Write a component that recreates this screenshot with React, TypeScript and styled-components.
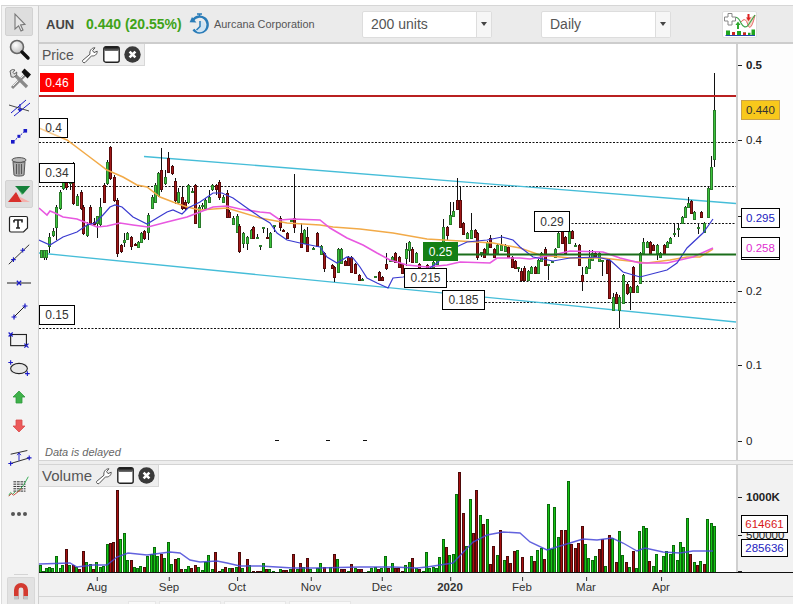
import * as React from 'react';
import styled, { createGlobalStyle } from 'styled-components';

const PLOT_LEFT = 39;
const PRICE_TOP = 44;
const PRICE_BOTTOM = 460;
const VOLUME_TOP = 465;
const VOLUME_BOTTOM = 572;

const GlobalStyle = createGlobalStyle`
  html, body {
    margin: 0;
    padding: 0;
    background: #fff;
    overflow: hidden;
  }
  body {
    font-family: "Liberation Sans", Arial, sans-serif;
  }
`;

const Page = styled.div`
  width: 793px;
  height: 604px;
  padding: 5px 0 0 1px;
  box-sizing: border-box;
  display: flex;
  overflow: hidden;
`;

const Sidebar = styled.div`
  width: 38px;
  flex: none;
  box-sizing: border-box;
  background: #f3f3f3;
  border-left: 1px solid #dcdcdc;
  border-right: 1px solid #cfcfcf;
  border-top: 1px solid #d6d6d6;
  display: flex;
  flex-direction: column;
  align-items: center;
  padding-top: 1px;
`;

const Tool = styled.div<{ $h?: number; $active?: boolean }>`
  width: 28px;
  height: ${p => p.$h ?? 29}px;
  flex: none;
  margin-right: 3px;
  box-sizing: border-box;
  display: flex;
  align-items: center;
  justify-content: center;
  background: ${p => (p.$active ? '#dedede' : 'transparent')};
  border: 1px solid ${p => (p.$active ? '#d2d2d2' : 'transparent')};
  border-radius: 2px;
`;

const MagnetSlot = styled.div`
  margin-top: auto;
  width: 28px;
  height: 27px;
  margin-left: 1px;
  position: relative;
  box-sizing: border-box;
  border-top: 1px solid #d8d8d8;
  border-left: 1px solid #d8d8d8;
  border-right: 1px solid #d8d8d8;
  background: #e2e2e2;
  border-radius: 2px 2px 0 0;
  display: flex;
  align-items: center;
  justify-content: center;

  &::before {
    content: '';
    position: absolute;
    left: 6px;
    right: 6px;
    top: -4px;
    height: 1px;
    background: #d4d4d4;
  }
`;

const Main = styled.div`
  flex: 1;
  min-width: 0;
  display: flex;
  flex-direction: column;
`;

const TopBar = styled.div`
  height: 39px;
  flex: none;
  box-sizing: border-box;
  background: #ebebeb;
  border-top: 1px solid #d6d6d6;
  border-bottom: 2px solid #cdcdcd;
  display: flex;
  align-items: center;
  padding-left: 7px;
`;

const Symbol = styled.span`
  font-size: 13px;
  font-weight: bold;
  color: #444;
  width: 40px;
`;

const Change = styled.span`
  font-size: 14px;
  font-weight: bold;
  color: #3fa318;
  width: 103px;
  white-space: nowrap;
`;

const CompanyName = styled.span`
  font-size: 10.9px;
  color: #555;
  width: 148px;
  margin-left: 4px;
  white-space: nowrap;
`;

const Select = styled.div`
  width: 130px;
  height: 27px;
  box-sizing: border-box;
  background: #fff;
  border: 1px solid #ddd;
  border-radius: 2px;
  display: flex;
  align-items: center;
  font-size: 14px;
  color: #555;
  padding-left: 8px;
  margin-right: 49px;
`;

const SelectText = styled.span`
  flex: 1;
`;

const SelectArrow = styled.span`
  width: 15px;
  height: 100%;
  box-sizing: border-box;
  border-left: 1px solid #ddd;
  background: #f6f6f6;
  display: flex;
  align-items: center;
  justify-content: center;

  &::after {
    content: '';
    border-left: 3.5px solid transparent;
    border-right: 3.5px solid transparent;
    border-top: 4px solid #444;
  }
`;

const IndicatorButton = styled.div`
  width: 35px;
  height: 27px;
  margin-left: 2px;
  box-sizing: border-box;
  background: #fff;
  border: 1px solid #ddd;
  border-radius: 2px;
  display: flex;
  align-items: center;
  justify-content: center;
`;

const PaneRow = styled.div<{ $h: number }>`
  height: ${p => p.$h}px;
  flex: none;
  display: flex;
`;

const Plot = styled.div`
  width: 697px;
  flex: none;
  position: relative;
  background: #fff;
  overflow: hidden;
`;

const ChartSvg = styled.svg`
  display: block;
  width: 100%;
  height: 100%;
`;

const Axis = styled.div<{ $bg: string }>`
  flex: 1;
  position: relative;
  background: ${p => p.$bg};
  border-left: 2px solid #d0d0d0;
  box-sizing: border-box;
`;

const PaneTitle = styled.div<{ $size: number }>`
  position: absolute;
  left: 0;
  top: 0;
  height: 22px;
  box-sizing: border-box;
  padding: 0 3px 0 3px;
  display: flex;
  align-items: center;
  background: #eee;
  border-right: 1px solid #d8d8d8;
  border-bottom: 1px solid #d8d8d8;
  font-size: ${p => p.$size}px;
  color: #555;
`;

const TitleName = styled.span<{ $w: number }>`
  width: ${p => p.$w}px;
`;

const TitleIcons = styled.span`
  display: flex;
  align-items: center;
  gap: 4px;
`;

const Note = styled.div`
  position: absolute;
  left: 6px;
  bottom: 2px;
  font-size: 11px;
  font-style: italic;
  color: #666;
`;

const LineTag = styled.div<{
  $x: number;
  $y: number;
  $w: number;
  $h: number;
  $bg?: string;
  $border?: string;
  $color?: string;
}>`
  position: absolute;
  left: ${p => p.$x - PLOT_LEFT}px;
  top: ${p => p.$y - PRICE_TOP}px;
  width: ${p => p.$w}px;
  height: ${p => p.$h}px;
  box-sizing: border-box;
  display: flex;
  align-items: center;
  justify-content: center;
  font-size: 12px;
  background: ${p => p.$bg ?? '#fff'};
  border: 1px solid ${p => p.$border ?? '#000'};
  color: ${p => p.$color ?? '#333'};
`;

const AxisText = styled.div<{ $y: number; $bold?: boolean }>`
  position: absolute;
  left: 8px;
  top: ${p => p.$y}px;
  transform: translateY(-50%);
  font-size: 11.5px;
  font-weight: ${p => (p.$bold ? 'bold' : 'normal')};
  color: #222;
  white-space: nowrap;

  &::before {
    content: '';
    position: absolute;
    left: -8px;
    top: 50%;
    width: 4px;
    height: 1px;
    background: #222;
  }
`;

const ValueBox = styled.div<{
  $y: number;
  $h: number;
  $w: number;
  $color: string;
  $bg?: string;
  $border?: string;
  $double?: boolean;
}>`
  position: absolute;
  left: 3px;
  top: ${p => p.$y}px;
  width: ${p => p.$w}px;
  height: ${p => p.$h}px;
  box-sizing: border-box;
  display: flex;
  align-items: center;
  justify-content: center;
  font-size: 11.5px;
  color: ${p => p.$color};
  background: ${p => p.$bg ?? '#fff'};
  border: 1px solid ${p => p.$border ?? '#000'};
  border-bottom: ${p => (p.$double ? '3px double #000' : undefined)};
`;

const PaneGap = styled.div`
  height: 5px;
  flex: none;
  box-sizing: border-box;
  background: #eee;
  border-top: 1px solid #d4d4d4;
  border-bottom: 1px solid #d4d4d4;
`;

const DateAxis = styled.div`
  height: 25px;
  flex: none;
  position: relative;
  background: #f1f1f1;
  border-top: 1px solid #111;
  border-bottom: 1px solid #d4d4d4;
  box-sizing: border-box;
`;

const DateLabel = styled.div<{ $x: number; $bold?: boolean }>`
  position: absolute;
  left: ${p => p.$x - PLOT_LEFT}px;
  top: 8px;
  transform: translateX(-50%);
  font-size: 11.5px;
  font-weight: ${p => (p.$bold ? 'bold' : 'normal')};
  color: #333;

  &::before {
    content: '';
    position: absolute;
    left: 50%;
    top: -4px;
    width: 1px;
    height: 4px;
    background: #333;
  }
`;

const BottomBar = styled.div`
  flex: 1;
  background: #f0f0f0;
  display: flex;
  align-items: flex-end;
  gap: 3px;
  padding-left: 89px;
`;

const BottomTab = styled.div<{ $w: number }>`
  width: ${p => p.$w}px;
  height: 2px;
  background: #f9f9f9;
  border: 1px solid #e6e6e6;
  border-bottom: none;
`;

// page coordinates: [x, wick top, wick bottom, body top, body bottom, 1 = up]
type Candle = [number, number, number, number, number, number];

const candles: Candle[] = [
  [41, 250, 258, 250, 257, 1], [44, 250, 260, 250, 257, 1], [46, 250, 260, 250, 257, 1],
  [49, 233, 253, 237, 246, 1], [53, 228, 237, 231, 235, 1], [56, 205, 240, 207, 227, 1],
  [60, 190, 210, 192, 208, 1], [63, 180, 190, 182, 188, 1], [66, 180, 190, 182, 187, 0],
  [70, 172, 190, 182, 183, 1], [73, 162, 205, 177, 203, 0], [77, 194, 206, 196, 205, 1],
  [81, 190, 210, 192, 208, 0], [83, 205, 235, 207, 233, 0], [87, 222, 237, 225, 235, 1],
  [90, 205, 225, 207, 223, 0], [94, 218, 226, 222, 224, 0], [97, 216, 238, 216, 223, 1],
  [100, 198, 227, 207, 224, 1], [104, 183, 203, 185, 202, 0], [107, 160, 185, 162, 183, 1],
  [110, 146, 180, 147, 178, 0], [114, 175, 202, 177, 200, 0], [117, 198, 257, 200, 253, 0],
  [121, 244, 253, 245, 251, 0], [124, 233, 247, 240, 242, 1], [127, 232, 240, 233, 239, 1],
  [131, 236, 250, 237, 246, 0], [135, 243, 246, 244, 245, 0], [138, 241, 248, 242, 247, 1],
  [141, 232, 243, 233, 242, 1], [144, 230, 240, 231, 238, 0], [148, 213, 240, 215, 232, 1],
  [152, 195, 208, 197, 208, 1], [155, 183, 203, 185, 202, 1], [158, 172, 197, 173, 195, 1],
  [161, 148, 192, 170, 189, 0], [165, 170, 185, 177, 183, 1], [168, 152, 173, 158, 172, 0],
  [172, 165, 175, 166, 173, 0], [175, 178, 204, 181, 200, 0], [178, 188, 204, 192, 202, 1],
  [182, 186, 210, 197, 208, 0], [185, 200, 210, 202, 208, 0], [188, 184, 204, 185, 202, 1],
  [192, 188, 193, 191, 192, 1], [195, 184, 224, 185, 223, 0], [199, 205, 228, 207, 227, 1],
  [202, 203, 209, 205, 206, 1], [205, 198, 210, 200, 208, 1], [209, 190, 203, 197, 202, 1],
  [212, 184, 191, 185, 189, 1], [216, 184, 195, 185, 189, 0], [219, 180, 200, 182, 197, 0],
  [223, 195, 203, 197, 202, 1], [227, 190, 218, 193, 217, 0], [229, 210, 218, 212, 217, 0],
  [233, 216, 225, 218, 224, 1], [237, 214, 233, 216, 232, 1], [239, 224, 253, 226, 251, 0],
  [243, 232, 248, 233, 243, 1], [247, 236, 250, 237, 243, 1], [251, 229, 239, 230, 238, 1],
  [253, 226, 239, 227, 238, 0], [257, 234, 238, 237, 238, 1], [260, 245, 250, 245, 246, 1],
  [263, 227, 233, 227, 228, 1], [267, 228, 238, 237, 238, 0], [270, 232, 248, 233, 247, 1],
  [274, 225, 232, 225, 226, 1], [280, 216, 231, 218, 227, 0], [283, 229, 231, 230, 231, 0],
  [287, 232, 239, 233, 238, 0], [291, 220, 222, 220, 221, 1], [294, 174, 233, 218, 227, 0],
  [301, 223, 248, 233, 247, 0], [304, 229, 244, 230, 243, 1], [307, 227, 252, 237, 251, 0],
  [313, 247, 249, 248, 249, 1], [317, 232, 247, 233, 246, 0], [321, 245, 255, 246, 254, 1],
  [324, 252, 272, 253, 268, 0], [332, 264, 269, 265, 268, 0], [334, 266, 282, 267, 277, 0],
  [338, 248, 273, 249, 272, 1], [341, 248, 264, 249, 263, 1], [345, 260, 266, 261, 265, 0],
  [348, 256, 266, 257, 265, 0], [351, 256, 273, 257, 272, 0], [355, 263, 274, 264, 273, 0],
  [359, 274, 281, 275, 280, 0], [362, 278, 280, 279, 280, 1], [375, 276, 278, 276, 277, 1],
  [379, 271, 281, 272, 280, 0], [382, 276, 281, 277, 280, 0], [386, 253, 270, 264, 268, 0],
  [390, 260, 262, 260, 261, 1], [392, 256, 262, 257, 261, 1], [395, 252, 263, 253, 262, 0],
  [399, 256, 268, 257, 267, 0], [402, 263, 274, 264, 273, 0], [406, 243, 266, 249, 258, 1],
  [409, 241, 262, 242, 250, 1], [412, 247, 263, 249, 262, 0], [416, 252, 263, 253, 262, 1],
  [419, 263, 269, 264, 268, 0], [427, 264, 268, 265, 268, 0], [433, 261, 268, 262, 267, 1],
  [437, 255, 265, 258, 264, 1], [443, 219, 243, 227, 242, 1], [447, 226, 240, 227, 235, 0],
  [450, 202, 225, 215, 224, 1], [453, 202, 217, 211, 216, 1], [457, 178, 210, 200, 209, 0],
  [460, 187, 228, 200, 227, 0], [463, 222, 235, 223, 234, 0], [467, 232, 239, 233, 238, 1],
  [471, 213, 239, 230, 238, 1], [475, 229, 238, 230, 237, 0], [477, 232, 260, 233, 257, 0],
  [481, 252, 257, 252, 253, 1], [484, 248, 258, 249, 257, 0], [487, 241, 254, 242, 253, 1],
  [490, 235, 248, 238, 247, 0], [494, 248, 258, 249, 257, 0], [497, 244, 254, 245, 253, 1],
  [501, 235, 250, 245, 250, 1], [505, 244, 252, 246, 251, 1], [508, 246, 258, 247, 257, 0],
  [512, 256, 268, 257, 267, 0], [515, 260, 269, 261, 268, 0], [518, 267, 272, 267, 268, 1],
  [521, 268, 282, 271, 280, 0], [524, 266, 281, 268, 280, 0], [528, 270, 281, 271, 280, 1],
  [531, 266, 274, 267, 273, 1], [535, 266, 274, 267, 273, 0], [538, 259, 274, 260, 273, 1],
  [541, 252, 262, 253, 261, 1], [545, 247, 266, 249, 265, 0], [548, 264, 280, 264, 265, 1],
  [552, 261, 262, 261, 262, 1], [555, 248, 258, 249, 257, 1], [558, 230, 248, 233, 247, 1],
  [562, 229, 244, 230, 243, 0], [565, 236, 254, 237, 253, 0], [569, 230, 244, 231, 243, 1],
  [572, 230, 239, 231, 238, 0], [575, 243, 246, 245, 246, 1], [579, 244, 266, 245, 265, 0],
  [582, 267, 291, 275, 281, 0], [586, 266, 274, 267, 273, 1], [589, 250, 269, 257, 268, 1],
  [592, 250, 261, 253, 260, 1], [595, 252, 257, 253, 256, 0], [599, 252, 262, 253, 261, 1],
  [602, 260, 276, 260, 261, 1], [607, 259, 274, 260, 273, 0], [609, 259, 299, 260, 298, 0],
  [613, 293, 311, 297, 310, 1], [616, 292, 304, 294, 303, 0], [619, 295, 328, 297, 310, 1],
  [623, 274, 304, 275, 303, 1], [627, 282, 295, 284, 293, 0], [630, 286, 310, 287, 292, 1],
  [633, 266, 293, 267, 292, 0], [637, 285, 293, 286, 292, 1], [640, 252, 284, 253, 283, 1],
  [643, 238, 254, 242, 253, 1], [647, 241, 248, 242, 247, 1], [650, 241, 254, 242, 253, 0],
  [653, 244, 251, 245, 250, 0], [657, 244, 260, 245, 253, 1], [660, 252, 258, 253, 257, 1],
  [664, 244, 254, 245, 253, 0], [667, 241, 248, 242, 247, 1], [670, 237, 244, 238, 243, 1],
  [674, 223, 237, 233, 234, 1], [678, 223, 237, 228, 229, 1], [682, 216, 224, 217, 223, 1],
  [685, 206, 218, 207, 217, 1], [688, 197, 208, 203, 207, 1], [691, 200, 214, 201, 213, 0],
  [694, 211, 220, 212, 219, 1], [698, 223, 234, 227, 228, 1], [701, 211, 218, 212, 217, 0],
  [704, 222, 233, 223, 232, 1], [708, 187, 218, 188, 217, 1], [711, 156, 190, 167, 189, 1],
  [714, 73, 167, 110, 159, 1],
];

const pts = (a: number[][]) => a.map(p => p.join(',')).join(' ');

const blueMa = [[39,240],[50,245],[63,237],[77,232],[87,225],[95,223],[103,215],[110,207],[115,205],[122,207],[133,217],[147,224],[157,218],[167,212],[173,210],[182,214],[188,208],[200,202],[213,193],[222,193],[233,198],[247,208],[260,217],[270,223],[277,233],[287,240],[300,243],[320,247],[327,257],[337,263],[347,257],[353,258],[360,267],[367,278],[377,283],[388,288],[393,278],[403,277],[423,273],[437,263],[450,250],[467,242],[487,240],[502,237],[513,240],[520,247],[533,257],[553,261],[570,258],[597,257],[610,260],[623,272],[640,277],[667,270],[677,263],[687,248],[703,233],[713,219]];
const pinkMa = [[39,208],[47,215],[50,211],[55,213],[63,217],[77,219],[87,223],[97,227],[107,226],[120,223],[133,225],[148,227],[167,222],[187,217],[200,212],[213,207],[227,206],[240,209],[260,212],[270,213],[280,220],[293,219],[320,220],[330,228],[347,238],[363,245],[377,253],[390,260],[407,265],[427,267],[447,265],[460,262],[490,263],[497,258],[520,258],[530,259],[553,255],[570,251],[603,252],[620,258],[640,263],[667,263],[680,260],[693,257],[713,248]];
const orangeMa = [[39,128],[48,132],[67,140],[87,155],[107,170],[123,177],[137,185],[147,187],[160,197],[173,202],[187,207],[200,210],[227,208],[260,218],[287,223],[320,225],[333,227],[360,229],[393,233],[427,239],[460,241],[493,243],[520,248],[540,255],[570,258],[603,258],[620,260],[647,263],[670,260],[687,257],[700,257],[713,249]];
const volumeMa = [[39,564],[70,563],[77,567],[93,565],[107,565],[117,557],[128,553],[147,555],[170,552],[180,553],[190,560],[200,562],[217,561],[227,563],[240,566],[260,566],[277,567],[293,568],[317,568],[360,567],[393,567],[417,568],[427,567],[440,565],[453,563],[473,542],[487,535],[503,532],[520,533],[530,542],[547,550],[570,543],[583,539],[597,540],[612,538],[623,543],[637,551],[645,548],[663,552],[680,553],[693,551],[713,551]];

// volume bars, read off as tripled coordinates per stretch of the chart
const parseBars = (src: string, ox: number, oy: number) =>
  src.split(' ').map(s => {
    const m = s.match(/(\d+)([gr])(\d+)/)!;
    return { x: ox + +m[1] / 3, top: oy + +m[3] / 3, up: m[2] === 'g' };
  });

const volumeBars = [
  ...parseBars('120g735 128g752 137g745 147g740 157g745 169g708 179g745 187g735 198r688 208g735 220r735 228g740 238r748 250r693 258g727 270g732 280r747 289g727 299g742 310g738 322g672 331r670 340r667 352r510 361g657 373g640 382g720 392r720 403g742 412g745 421g737 433r742 442g708 452g703 463g682 472g708 484r702 493g714 505g667 513g733 524r718 535g714 544r748 556g748 565g737 574r745 586r735 595g742 606g750 616g725 625g706 636g748 646r697 658r752 667g746 676r742 688g745 697r745 709g742 718r697 727g745 740r718 748g735 758r752 770r752', 0, 320),
  ...parseBars('0r332 10g310 19r326 28g326 40g332 50r335 61g328 70r331 79r331 91g328 100r283 112g328 121r310 130g322 142r295 151g328 163r335 172g325 181g310 193r322 202r335 211g322 223r283 232g298 242r328 253r328 263g332 274r313 284g325 293r328 304r328 314r335 325g332 334g325 346g320 355r328 364g323 376g289 385r325 397g310 406r325 415r323 427r332 436g316 447g306 457r295 467g325 478r328 488g332 499g277 508g323 518g322 529g323 538g292 548g238 559r262 568g286 580g283 589g103 598r37 610r160 619g258 631g118 640r220 649r91 661g166 670r193 682g178 691r313 700r259 712g286 721r211 733g301 742r289 751r310 763r274 772g271 785r292', 260, 460),
  ...parseBars('4g289 13r304 22g271 34g265 43r298 55g133 64g268 73g142 85g232 94r211 106r211 115g64 124r253 136r265 145r250 157r199 166g253 175g295 187g301 196g289 208r268 217r238 226g319 238r226 247g235 259r307 268g214 277g286 289r307 298g322 310r274 319g325 328g214 340g199 349g205 358r304 370g319 379g283 391r331 400g289 409g274 421g283 430g256 442g301 451g247 460g262 472g175 481r283 493g307 502r316 511g304 523r313 532g178 544g190 553g199', 530, 460),
];

const months: { label: string; x: number; bold?: boolean }[] = [
  { label: 'Aug', x: 97 },
  { label: 'Sep', x: 169 },
  { label: 'Oct', x: 237 },
  { label: 'Nov', x: 311 },
  { label: 'Dec', x: 382 },
  { label: '2020', x: 450, bold: true },
  { label: 'Feb', x: 522 },
  { label: 'Mar', x: 586 },
  { label: 'Apr', x: 661 },
];

const Icon = ({ w = 26, h = 24, children }: { w?: number; h?: number; children: React.ReactNode }) => (
  <svg width={w} height={h} viewBox={`0 0 ${w} ${h}`}>
    {children}
  </svg>
);

const Cross = ({ x, y }: { x: number; y: number }) => (
  <path d={`M${x - 2.5} ${y}h5M${x} ${y - 2.5}v5`} stroke="#1a1ac8" strokeWidth="1.2" fill="none" />
);

const XMark = ({ x, y }: { x: number; y: number }) => (
  <path d={`M${x - 2.2} ${y - 2.2}l4.4 4.4M${x + 2.2} ${y - 2.2}l-4.4 4.4`} stroke="#1a1ac8" strokeWidth="1.3" fill="none" />
);

const WrenchIcon = () => (
  <svg width="18" height="18" viewBox="0 0 18 18">
    <path
      d="M1.5 14.5 9 8.2C8.2 5 10.5 1.6 14 1.8L11.6 4.6 13 6.6 16.2 5.2C16.4 8.4 13.4 10.6 10.6 9.8L4 16.6C2.8 17.2 1 16 1.5 14.5Z"
      fill="#fff"
      stroke="#555"
      strokeWidth="1"
    />
  </svg>
);

const WindowIcon = () => (
  <svg width="17" height="17" viewBox="0 0 17 17">
    <defs>
      <linearGradient id="winbar" x1="0" y1="0" x2="0" y2="1">
        <stop offset="0" stopColor="#111" />
        <stop offset="1" stopColor="#777" />
      </linearGradient>
    </defs>
    <rect x="0.8" y="0.8" width="15.4" height="15.4" rx="2" fill="#fff" stroke="#222" strokeWidth="1.4" />
    <rect x="1" y="1" width="15" height="4" rx="1.5" fill="url(#winbar)" />
  </svg>
);

const CloseIcon = () => (
  <svg width="17" height="17" viewBox="0 0 17 17">
    <circle cx="8.5" cy="8.5" r="8.2" fill="#3a3a3a" />
    <path d="M5.6 5.6l5.8 5.8M11.4 5.6l-5.8 5.8" stroke="#fff" strokeWidth="2.6" />
  </svg>
);

const TitleTools = () => (
  <TitleIcons>
    <WrenchIcon />
    <WindowIcon />
    <CloseIcon />
  </TitleIcons>
);

const ClockIcon = () => (
  <svg width="21" height="24" viewBox="0 0 21 24">
    <path d="M8 2h5M10.5 2v3" stroke="#2a7cb8" strokeWidth="1.6" fill="none" />
    <path d="M3.8 8.5A8 8 0 1 1 4.4 17.6" stroke="#2a7cb8" strokeWidth="2.4" fill="none" />
    <path d="M0.6 10.2 7.4 10.4 3 5Z" fill="#2a7cb8" />
    <path d="M11 8.6A5.8 5.8 0 0 1 11 20.2 5.8 5.8 0 0 1 6 17.4L11 14.4Z" fill="#cfe4f3" />
    <path d="M11 9v5.5L7.5 18" stroke="#2a7cb8" strokeWidth="1.5" fill="none" />
  </svg>
);

const IndicatorIcon = () => (
  <svg width="33" height="25" viewBox="0 0 33 25">
    <path d="M18 10C21 6 23 7 25 13 26 17 29 17 32 3" stroke="#e86a6a" strokeWidth="1" fill="#f4d8c8" />
    <path d="M9 9C12 4 15 4 18 11 20 15 23 17 26 12 28 9 30 6 32 3" stroke="#3da54a" strokeWidth="1.2" fill="none" />
    <path d="M5 1.5h4v3.5h3.5v4H9v4H5V9H1.5V5H5Z" fill="#fff" stroke="#888" strokeWidth="1" />
    <path d="M14 17v-4h-1.6l2.6-3.4 2.6 3.4H16v4Z" fill="#2ea82e" />
    <path d="M24.5 2v3.6H23l2.5 3.4 2.5-3.4h-1.5V2Z" fill="#d22" />
    <path d="M3 23V18.5h4V23M9 23V20h3v3M14 23v-4h4v4M20 23v-2.5h3V23M25 23v-2.2h2.5V23M28.5 23v-5.5H32V23Z" fill="#1fa51f" />
    <path d="M9 23v-3h3v3ZM20 23v-2.5h3V23Z" fill="#c22" />
    <path d="M2.5 23.5H32" stroke="#2244aa" strokeWidth="1" />
  </svg>
);

const PointerIcon = () => (
  <Icon>
    <path d="M9 4 9 19 12.6 15.8 15 21 17 20 14.6 15 19 14.4Z" fill="#e6e6e6" stroke="#777" strokeWidth="1.1" />
  </Icon>
);

const MagnifierIcon = () => (
  <Icon>
    <defs>
      <radialGradient id="lens" cx="0.4" cy="0.35" r="0.7">
        <stop offset="0" stopColor="#fff" />
        <stop offset="1" stopColor="#bbb" />
      </radialGradient>
    </defs>
    <circle cx="11" cy="9" r="6.5" fill="url(#lens)" stroke="#666" strokeWidth="1.6" />
    <path d="M16 14l6 6" stroke="#111" strokeWidth="3.4" strokeLinecap="round" />
  </Icon>
);

const ToolsIcon = () => (
  <Icon>
    <path d="M6 21 19 8" stroke="#8a8a8a" strokeWidth="3" />
    <path d="M7 19 18 8" stroke="#eee" strokeWidth="1" />
    <path d="M8 7 21 20" stroke="#8a8a8a" strokeWidth="3.2" />
    <path d="M4 4a4.2 4.2 0 0 1 5-1L7 5.4l1.5 1.6 2.2-2a4.2 4.2 0 0 1-5.5 5Z" fill="#ddd" stroke="#555" strokeWidth="0.9" />
    <path d="M15.5 5 18.5 1.5 25 7.5l-3.5 4Z" fill="#111" />
  </Icon>
);

const TrendCrossIcon = () => (
  <Icon>
    <path d="M5 18 20 5M8 21 24 8" stroke="#1a1ac8" strokeWidth="1" />
    <path d="M3 10 23 16" stroke="#333" strokeWidth="0.9" />
    <path d="M14 9v7M12 14l2 2 2-2" stroke="#1a1ac8" strokeWidth="1.1" fill="none" />
  </Icon>
);

const DotLineIcon = () => (
  <Icon>
    <path d="M7 18 19 7" stroke="#1a1ac8" strokeWidth="1" strokeDasharray="2 1.5" />
    <rect x="5" y="16" width="3.6" height="3.6" fill="#1a1ac8" />
    <rect x="11.4" y="10.8" width="3" height="3" fill="#1a1ac8" />
    <rect x="17.5" y="5" width="3.6" height="3.6" fill="#1a1ac8" />
  </Icon>
);

const TrashIcon = () => (
  <Icon>
    <ellipse cx="13" cy="6" rx="7" ry="2.4" fill="#bbb" stroke="#555" strokeWidth="1" />
    <path d="M7 7.5 8 21c1 1.4 9 1.4 10 0L19 7.5C17 9 9 9 7 7.5Z" fill="#a9a9a9" stroke="#555" strokeWidth="1" />
    <path d="M10.5 10v10M13 10v10.5M15.5 10v10" stroke="#555" strokeWidth="1" />
  </Icon>
);

const TradeIcon = () => (
  <Icon w={24} h={24}>
    <path d="M2 4H23L15 13 9 4Z" fill="#52b86e" />
    <path d="M8 4H23L16 12Z" fill="#15803a" />
    <path d="M9 10 15 20H1Z" fill="#d8302c" />
    <path d="M11 14 23 20H15Z" fill="#f4b0ac" />
  </Icon>
);

const TextIcon = () => (
  <Icon>
    <path d="M5 4.5h15a1.5 1.5 0 0 1 1.5 1.5v10l-4 4H5A1.5 1.5 0 0 1 3.5 18.5V6A1.5 1.5 0 0 1 5 4.5Z" fill="#fff" stroke="#222" strokeWidth="1.2" />
    <path d="M8 8h8v2.4M8 8v2.4M12 8v8M10 16h4" stroke="#222" strokeWidth="1.6" fill="none" />
  </Icon>
);

const LongLineIcon = () => (
  <Icon w={28} h={24}>
    <path d="M3 23 25 2" stroke="#222" strokeWidth="1" />
    <Cross x={8} y={18} />
    <Cross x={18} y={8} />
  </Icon>
);

const HLineIcon = () => (
  <Icon w={26} h={12}>
    <path d="M1 6H25" stroke="#222" strokeWidth="1" />
    <XMark x={13} y={6} />
  </Icon>
);

const ShortLineIcon = () => (
  <Icon>
    <path d="M8 17 19 6" stroke="#222" strokeWidth="1" />
    <Cross x={8} y={17} />
    <Cross x={19} y={6} />
  </Icon>
);

const RectIcon = () => (
  <Icon w={28} h={24}>
    <rect x="5" y="5" width="17" height="12" fill="none" stroke="#222" strokeWidth="1.2" />
    <XMark x={5} y={5} />
    <XMark x={22} y={17} />
  </Icon>
);

const EllipseIcon = () => (
  <Icon w={28} h={24}>
    <rect x="5" y="6" width="17" height="11" fill="#e6e6e6" />
    <ellipse cx="14" cy="11.5" rx="9" ry="5.5" fill="none" stroke="#222" strokeWidth="1.2" />
    <Cross x={5} y={5} />
    <Cross x={23} y={17} />
  </Icon>
);

const ArrowUpIcon = () => (
  <Icon>
    <path d="M13 6 19 12H16V18H10V12H7Z" fill="#3fb14a" stroke="#2e9a3c" strokeWidth="0.8" />
  </Icon>
);

const ArrowDownIcon = () => (
  <Icon>
    <path d="M10 6H16V12H19L13 18 7 12H10Z" fill="#ec5a5a" stroke="#d84a4a" strokeWidth="0.8" />
  </Icon>
);

const ChannelIcon = () => (
  <Icon w={28} h={24}>
    <path d="M5 9 23 5M5 19 25 13" stroke="#222" strokeWidth="1" />
    <path d="M14 8v8" stroke="#1a1ac8" strokeWidth="1" />
    <path d="M12 10l2-2.5 2 2.5" stroke="#1a1ac8" strokeWidth="1" fill="none" />
    <Cross x={5} y={19} />
    <Cross x={25} y={13} />
  </Icon>
);

const FibIcon = () => (
  <Icon w={28} h={24}>
    <path d="M8 7.5h13M8 10h13M8 12.5h13M8 15h13M8 17.5h13" stroke="#222" strokeWidth="1" strokeDasharray="3 0.8" />
    <path d="M12 19 19 11 24 2" stroke="#2fa84f" strokeWidth="1" fill="none" />
    <path d="M3 22 5 19 7 21 10 18" stroke="#2fa84f" strokeWidth="1" fill="none" />
    <path d="M3 23 6 20 8 22 12 19 17 15" stroke="#c94a3a" strokeWidth="1" fill="none" />
  </Icon>
);

const DotsIcon = () => (
  <Icon h={10}>
    <circle cx="7" cy="5" r="2" fill="#555" />
    <circle cx="13" cy="5" r="2" fill="#555" />
    <circle cx="19" cy="5" r="2" fill="#555" />
  </Icon>
);

const MagnetIcon = () => (
  <svg width="18" height="20" viewBox="0 0 18 20">
    <path d="M2 18V9a7 7 0 0 1 14 0v9h-4.6V9a2.4 2.4 0 0 0-4.8 0v9Z" fill="#d33a30" />
    <path d="M2 15h4.6v3.4H2ZM11.4 15H16v3.4h-4.6Z" fill="#bfc4c6" />
  </svg>
);

const CandleMark = ({ c }: { c: Candle }) => {
  const [x, high, low, top, bottom, up] = c;
  const px = Math.round(x);
  return (
    <g shapeRendering="crispEdges">
      <path d={`M${px + 0.5} ${high}V${low}`} stroke="#111" strokeWidth="1" />
      <rect
        x={px - 0.5}
        y={top + 0.5}
        width={2}
        height={Math.max(bottom - top, 1)}
        fill={up ? '#3cc43c' : '#a01818'}
        stroke={up ? '#2a7a2a' : '#5a0a0a'}
        strokeWidth="1"
      />
    </g>
  );
};

const PriceChart = () => (
  <ChartSvg viewBox={`${PLOT_LEFT} ${PRICE_TOP} 697 ${PRICE_BOTTOM - PRICE_TOP}`}>
    <g stroke="#111" strokeWidth="1" strokeDasharray="2 1.5">
      <path d="M39 142.5H736" />
      <path d="M39 186.5H736" />
      <path d="M568 223.5H736" />
      <path d="M446 281.5H736" />
      <path d="M485 302.5H736" />
      <path d="M39 328.5H736" />
    </g>
    <path d="M144 156.5 736 203.5" stroke="#45bdd8" strokeWidth="1.3" />
    <path d="M39 253 736 322" stroke="#45bdd8" strokeWidth="1.3" />
    {candles.map(c => (
      <CandleMark key={c[0]} c={c} />
    ))}
    <polyline points={pts(orangeMa)} fill="none" stroke="#f2aa48" strokeWidth="1.5" />
    <polyline points={pts(pinkMa)} fill="none" stroke="#e858e0" strokeWidth="1.6" />
    <polyline points={pts(blueMa)} fill="none" stroke="#3a3ad0" strokeWidth="1.2" />
    <path d="M39 96H736" stroke="#b92020" strokeWidth="2" />
    <path d="M456 254.5H736" stroke="#1b6e1b" strokeWidth="2" />
    <path d="M275 440.5h4M326 440.5h4M363 440.5h4" stroke="#111" strokeWidth="1" />
  </ChartSvg>
);

const VolumeChart = () => (
  <ChartSvg viewBox={`${PLOT_LEFT} ${VOLUME_TOP} 697 ${VOLUME_BOTTOM - VOLUME_TOP}`}>
    {volumeBars.map(b => (
      <rect
        key={b.x}
        x={Math.round(b.x) - 0.5}
        y={Math.round(b.top) + 0.5}
        width={2}
        height={VOLUME_BOTTOM - Math.round(b.top)}
        fill={b.up ? '#14c414' : '#a60f0f'}
        stroke={b.up ? '#0a6a0a' : '#4d0a0a'}
        strokeWidth="1"
        shapeRendering="crispEdges"
      />
    ))}
    <polyline points={pts(volumeMa)} fill="none" stroke="#4646d8" strokeWidth="1.4" opacity="0.85" />
  </ChartSvg>
);

export default function App() {
  return (
    <>
      <GlobalStyle />
      <Page>
        <Sidebar>
          <Tool $active><PointerIcon /></Tool>
          <Tool $h={28}><MagnifierIcon /></Tool>
          <Tool><ToolsIcon /></Tool>
          <Tool $h={28}><TrendCrossIcon /></Tool>
          <Tool $h={30}><DotLineIcon /></Tool>
          <Tool><TrashIcon /></Tool>
          <Tool $active $h={28}><TradeIcon /></Tool>
          <Tool $h={31}><TextIcon /></Tool>
          <Tool $h={30}><LongLineIcon /></Tool>
          <Tool $h={28}><HLineIcon /></Tool>
          <Tool><ShortLineIcon /></Tool>
          <Tool><RectIcon /></Tool>
          <Tool $h={28}><EllipseIcon /></Tool>
          <Tool $h={28}><ArrowUpIcon /></Tool>
          <Tool $h={30}><ArrowDownIcon /></Tool>
          <Tool $h={31}><ChannelIcon /></Tool>
          <Tool $h={28}><FibIcon /></Tool>
          <Tool $h={28}><DotsIcon /></Tool>
          <MagnetSlot><MagnetIcon /></MagnetSlot>
        </Sidebar>
        <Main>
          <TopBar>
            <Symbol>AUN</Symbol>
            <Change>0.440 (20.55%)</Change>
            <ClockIcon />
            <CompanyName>Aurcana Corporation</CompanyName>
            <Select>
              <SelectText>200 units</SelectText>
              <SelectArrow />
            </Select>
            <Select>
              <SelectText>Daily</SelectText>
              <SelectArrow />
            </Select>
            <IndicatorButton><IndicatorIcon /></IndicatorButton>
          </TopBar>
          <PaneRow $h={PRICE_BOTTOM - PRICE_TOP}>
            <Plot>
              <PriceChart />
              <PaneTitle $size={14}>
                <TitleName $w={39}>Price</TitleName>
                <TitleTools />
              </PaneTitle>
              <LineTag $x={40} $y={73} $w={34} $h={19} $bg="#f00" $border="#f00" $color="#fff">0.46</LineTag>
              <LineTag $x={39} $y={118} $w={29} $h={20} $bg="rgba(255,255,255,0.4)">0.4</LineTag>
              <LineTag $x={39} $y={163} $w={36} $h={20}>0.34</LineTag>
              <LineTag $x={39} $y={305} $w={36} $h={20}>0.15</LineTag>
              <LineTag $x={534} $y={211} $w={36} $h={21}>0.29</LineTag>
              <LineTag $x={423} $y={242} $w={35} $h={19} $bg="#157f15" $border="#157f15" $color="#fff">0.25</LineTag>
              <LineTag $x={404} $y={268} $w={43} $h={20}>0.215</LineTag>
              <LineTag $x={442} $y={290} $w={43} $h={20}>0.185</LineTag>
              <Note>Data is delayed</Note>
            </Plot>
            <Axis $bg="#fdfdfd">
              <AxisText $y={21} $bold>0.5</AxisText>
              <AxisText $y={96}>0.4</AxisText>
              <AxisText $y={172}>&nbsp;</AxisText>
              <AxisText $y={247}>0.2</AxisText>
              <AxisText $y={321}>0.1</AxisText>
              <AxisText $y={397}>0</AxisText>
              <ValueBox $y={56} $h={20} $w={39} $color="#333" $bg="#f8c81c" $border="#c9a24a">0.440</ValueBox>
              <ValueBox $y={164} $h={20} $w={39} $color="#2222c0">0.295</ValueBox>
              <ValueBox $y={193} $h={23} $w={39} $color="#e030d0" $double>0.258</ValueBox>
            </Axis>
          </PaneRow>
          <PaneGap />
          <PaneRow $h={VOLUME_BOTTOM - VOLUME_TOP}>
            <Plot>
              <VolumeChart />
              <PaneTitle $size={15}>
                <TitleName $w={53}>Volume</TitleName>
                <TitleTools />
              </PaneTitle>
            </Plot>
            <Axis $bg="#f2f2f2">
              <AxisText $y={32} $bold>1000K</AxisText>
              <AxisText $y={70}>500000</AxisText>
              <AxisText $y={106}>&nbsp;</AxisText>
              <ValueBox $y={50} $h={18} $w={47} $color="#d81818">614661</ValueBox>
              <ValueBox $y={74} $h={18} $w={47} $color="#2222c0">285636</ValueBox>
            </Axis>
          </PaneRow>
          <DateAxis>
            {months.map(m => (
              <DateLabel key={m.label} $x={m.x} $bold={m.bold}>{m.label}</DateLabel>
            ))}
          </DateAxis>
          <BottomBar>
            <BottomTab $w={26} />
            <BottomTab $w={60} />
            <BottomTab $w={60} />
            <BottomTab $w={60} />
          </BottomBar>
        </Main>
      </Page>
    </>
  );
}
